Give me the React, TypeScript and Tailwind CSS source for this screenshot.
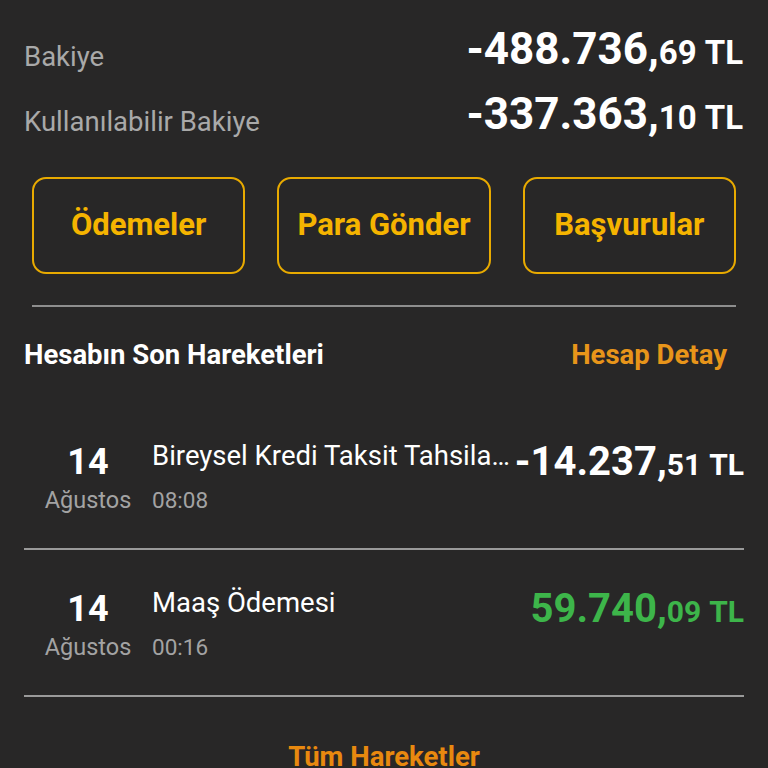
import React from "react";

interface Movement {
  day: string;
  month: string;
  title: string;
  time: string;
  whole: string;
  cents: string;
  positive?: boolean;
}

const movements: Movement[] = [
  {
    day: "14",
    month: "Ağustos",
    title: "Bireysel Kredi Taksit Tahsila…",
    time: "08:08",
    whole: "-14.237,",
    cents: "51",
  },
  {
    day: "14",
    month: "Ağustos",
    title: "Maaş Ödemesi",
    time: "00:16",
    whole: "59.740,",
    cents: "09",
    positive: true,
  },
];

const Amount = ({
  whole,
  cents,
  big,
  small,
  color = "text-white",
}: {
  whole: string;
  cents: string;
  big: string;
  small: string;
  color?: string;
}) => (
  <div className={`flex items-baseline font-bold whitespace-nowrap ${color}`}>
    <span className={big}>{whole}</span>
    <span className={small}>{cents}</span>
    <span className={`${small} ml-[8px]`}>TL</span>
  </div>
);

const App = () => {
  return (
    <div
      className="w-[768px] h-[768px] overflow-hidden bg-[#282727]"
      style={{ fontFamily: "Roboto, 'Noto Sans', sans-serif" }}
    >
      {/* bakiye */}
      <div className="pt-[16px] pl-[24px] pr-[25px]">
        <div className="flex justify-between items-center h-[65px]">
          <span className="text-[27.5px] leading-[32px] pt-[16px] text-[#a9a9a9]">
            Bakiye
          </span>
          <Amount
            whole="-488.736,"
            cents="69"
            big="text-[44px] leading-none"
            small="text-[33px] leading-none"
          />
        </div>
        <div className="flex justify-between items-center h-[65px]">
          <span className="text-[27.5px] leading-[32px] pt-[16px] text-[#a9a9a9]">
            Kullanılabilir Bakiye
          </span>
          <Amount
            whole="-337.363,"
            cents="10"
            big="text-[44px] leading-none"
            small="text-[33px] leading-none"
          />
        </div>
      </div>

      {/* buttons */}
      <div className="px-[32px] mt-[31px]">
        <div className="grid grid-cols-3 gap-[32px]">
          {["Ödemeler", "Para Gönder", "Başvurular"].map((label) => (
            <button
              key={label}
              className="h-[97px] rounded-[14px] border-2 border-[#e8aa00] text-[#f5b400] text-[31px] font-bold flex items-center justify-center"
            >
              {label}
            </button>
          ))}
        </div>
        <div className="mt-[31px] h-[2px] bg-[#8e8e8e]"></div>
      </div>

      {/* header */}
      <div className="h-[96px] flex items-center justify-between pl-[24px] pr-[41px]">
        <span className="text-[27.5px] font-bold text-white">
          Hesabın Son Hareketleri
        </span>
        <span className="text-[27.5px] font-bold text-[#e8951a]">Hesap Detay</span>
      </div>

      {/* movements */}
      <div className="px-[24px]">
        {movements.map((m, i) => (
          <div key={i} className="border-b-2 border-[#9a9a9a]">
            <div className="flex items-start pt-[39px] pb-[33px]">
              <div className="w-[128px] shrink-0 flex flex-col items-center">
                <span className="text-[36px] leading-[40px] font-bold text-white">
                  {m.day}
                </span>
                <span className="mt-[3px] text-[23.5px] leading-[30px] text-[#a3a3a3]">
                  {m.month}
                </span>
              </div>
              <div className="flex-1 min-w-0 flex flex-col pr-[4px]">
                <span className="whitespace-nowrap text-[27.5px] leading-[32px] -mt-[2px] text-white">
                  {m.title}
                </span>
                <span className="mt-[13px] text-[22.5px] leading-[30px] text-[#a3a3a3]">
                  {m.time}
                </span>
              </div>
              <div className="shrink-0 h-[40px] flex items-center">
                <Amount
                  whole={m.whole}
                  cents={m.cents}
                  big="text-[40px] leading-none"
                  small="text-[30px] leading-none"
                  color={m.positive ? "text-[#3db54a]" : "text-white"}
                />
              </div>
            </div>
          </div>
        ))}
      </div>

      <div className="pt-[44px] flex justify-center">
        <span className="text-[27.5px] leading-[32px] font-bold text-[#e8890f]">
          Tüm Hareketler
        </span>
      </div>
    </div>
  );
};

export default App;
